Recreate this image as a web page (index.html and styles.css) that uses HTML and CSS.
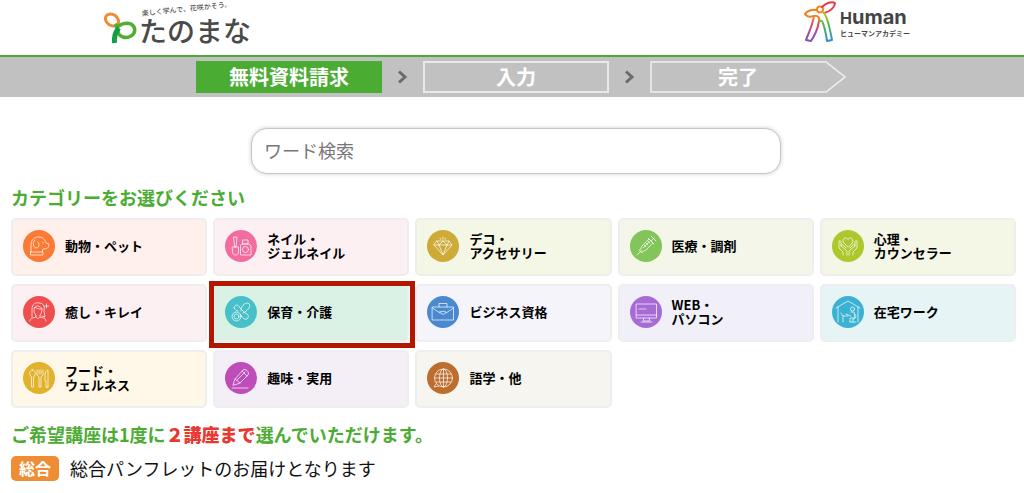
FILE: index.html
```
<!DOCTYPE html>
<html lang="ja">
<head>
    <meta charset="UTF-8">
    <meta name="viewport" content="width=device-width, initial-scale=1.0">
    <title>無料資料請求 | たのまな</title>
    <link rel="stylesheet" href="styles.css">
</head>
<body>
    <header class="header">
        <a href="#" class="logo">
            <svg width="150" height="48" viewBox="0 0 150 48" role="img" aria-label="たのまな">
                <g fill="none" stroke-linecap="butt">
                    <ellipse cx="8" cy="20" rx="7" ry="5.500" transform="rotate(35 8 20)" stroke="#f08c32" stroke-width="3"/>
                    <path d="M12 29C15 24 22 22 27 24C32 27 32 33 27 36C22 39 15 37 14 32C13 29 14 27 11 24" stroke="#4fae33" stroke-width="3.500"/>
                    <path d="M10.500 43C10 37 11 32 15 28" stroke="#0fa045" stroke-width="5"/>
                </g>
                <text class="logo-tagline" x="38" y="16" transform="rotate(-6 38 16)">楽しく学んで、花咲かそう。</text>
                <text class="logo-name" x="35" y="42">たのまな</text>
            </svg>
        </a>
        <a href="#" class="logo">
            <svg width="108" height="44" viewBox="0 0 108 44" role="img" aria-label="Human ヒューマンアカデミー">
                <defs>
                    <linearGradient id="body-left" x1="0" y1="0" x2="0" y2="1">
                        <stop offset="0" stop-color="#f08a24"/>
                        <stop offset=".3" stop-color="#e8474f"/>
                        <stop offset=".7" stop-color="#a04fae"/>
                        <stop offset="1" stop-color="#7a55bb"/>
                    </linearGradient>
                    <linearGradient id="body-right" x1="0" y1="0" x2="0" y2="1">
                        <stop offset="0" stop-color="#b9c42a"/>
                        <stop offset=".4" stop-color="#55b947"/>
                        <stop offset="1" stop-color="#2f8fd8"/>
                    </linearGradient>
                </defs>
                <g fill="none" stroke-width="2" stroke-linejoin="round" stroke-linecap="round">
                    <circle cx="16" cy="9.500" r="3" stroke="#f08a24"/>
                    <path d="M18 7C22 3 28 1 31 3C31 7 26 12 20 13" stroke="#e8374a"/>
                    <path d="M13 10C8 9 3 11 1 14C3 17 7 17 10 16" stroke="#f0801e"/>
                    <path d="M10 16C9 24 5 32 2 40L7 41C11 35 14 28 15 21C16 18 14 15 10 16" stroke="url(#body-left)"/>
                    <path d="M20 13C24 18 26 29 28 40L23 41C22 34 21 27 18 21H15" stroke="url(#body-right)"/>
                </g>
                <text class="human-name" x="36" y="24"><tspan class="human-cap">H</tspan>uman</text>
                <text class="human-sub" x="36" y="36">ヒューマンアカデミー</text>
            </svg>
        </a>
    </header>

    <!-- 進行ステップ -->
    <nav class="steps-bar" aria-label="お申し込みの流れ">
        <ol class="steps">
            <li class="step current" aria-current="step">無料資料請求</li>
            <li class="arrow" aria-hidden="true">
                <svg width="11" height="14" viewBox="0 0 11 14"><path d="M2 1.500L8 7L2 12.500" fill="none" stroke="#6b6b6b" stroke-width="3"/></svg>
            </li>
            <li class="step">入力</li>
            <li class="arrow" aria-hidden="true">
                <svg width="11" height="14" viewBox="0 0 11 14"><path d="M2 1.500L8 7L2 12.500" fill="none" stroke="#6b6b6b" stroke-width="3"/></svg>
            </li>
            <li class="step last">
                <svg class="step-shape" viewBox="0 0 196 32" aria-hidden="true"><path d="M1 1H176L195 16L176 31H1Z" fill="none" stroke="#efefef" stroke-width="1.500"/></svg>
                完了
            </li>
        </ol>
    </nav>

    <main class="main">
        <form class="search" role="search">
            <input type="search" class="search-input" placeholder="ワード検索" aria-label="ワード検索">
        </form>

        <h2 class="title">カテゴリーをお選びください</h2>
        <div class="categories">
            <button type="button" class="card pet">
                <svg class="icon" viewBox="0 0 32 32" aria-hidden="true">
                    <path d="M8 22V15C8 9 12 7 16 7C20 7 22 10 23 13L26 14C26 18 24 19 20 19L19 22M8 22H20V25H7.500V22Z"/>
                    <path d="M12 10C9 13 10 17 13 18C16 18 17 15 15 12M20 12V13"/>
                </svg>
                <span>動物・ペット</span>
            </button>
            <button type="button" class="card nail">
                <svg class="icon" viewBox="0 0 32 32" aria-hidden="true">
                    <path d="M9 7H12L11 17H10ZM7.500 17H13.500V22C13.500 24 12 25 10.500 25C9 25 7.500 24 7.500 22Z"/>
                    <path d="M18 10H23V14H18ZM17 14H24L26 16V25H15.500V16Z"/>
                    <circle cx="20.500" cy="19.500" r="3"/>
                </svg>
                <span>ネイル・<br>ジェルネイル</span>
            </button>
            <button type="button" class="card deco">
                <svg class="icon" viewBox="0 0 32 32" aria-hidden="true">
                    <path d="M10 11H22L25 15L16 25L7 15ZM7 15H25M12 15L16 25L20 15L16 11L12 15L10 11M20 15L22 11M16 7V9M13 8L14 9.500M19 8L18 9.500"/>
                </svg>
                <span>デコ・<br>アクセサリー</span>
            </button>
            <button type="button" class="card medical">
                <svg class="icon" viewBox="0 0 32 32" aria-hidden="true">
                    <path d="M7 25L11 21M9 20L12 23M10 20L12 16L19 9L23 13L16 20L12 22ZM18 8L24 14M21 11L24 8M21 6L26 11M14 15L16 17M16 13L18 15M18 11L20 13M13 18L19 12"/>
                </svg>
                <span>医療・調剤</span>
            </button>
            <button type="button" class="card mental">
                <svg class="icon" viewBox="0 0 32 32" aria-hidden="true">
                    <path d="M16 17L11.500 12.500C9.500 9 14 6 16 9.500C18 6 22.500 9 20.500 12.500Z"/>
                    <path d="M11 25V22L7 18V11C8 10 9 11 9 12V16L14 20L15 22V25M9 16C9 14 11 14 12 16L14 18"/>
                    <path d="M21 25V22L25 18V11C24 10 23 11 23 12V16L18 20L17 22V25M23 16C23 14 21 14 20 16L18 18"/>
                </svg>
                <span>心理・<br>カウンセラー</span>
            </button>
            <button type="button" class="card beauty">
                <svg class="icon" viewBox="0 0 32 32" aria-hidden="true">
                    <path d="M9 21C9 17 9 15 9 13C9 8 13 6 16 7C20 7 22 10 21 15L22 21L19 20M7 25C7 22 10 22 13 21V19C10 16 11 13 12 11C14 13 17 13 19 13C19 16 18 18 17 19V21C20 22 23 22 23 25M13 21C14 23 16 23 17 21M11 12C13 9 17 9 19 13"/>
                    <path d="M23.500 8V12M21.500 10H25.500"/>
                </svg>
                <span>癒し・キレイ</span>
            </button>
            <button type="button" class="card care selected">
                <svg class="icon" viewBox="0 0 32 32" aria-hidden="true">
                    <circle cx="11.500" cy="20.500" r="4.500"/>
                    <circle cx="11.500" cy="20.500" r="2.500"/>
                    <path d="M9 12C10 8 13 8 15 12L20 17C24 18 24 21 22 23C18 24 17 20 15 18M9 12C10 14 11 14 13 15M16 15C16 10 19 7 23 7C27 9 24 14 18 17"/>
                </svg>
                <span>保育・介護</span>
            </button>
            <button type="button" class="card business">
                <svg class="icon" viewBox="0 0 32 32" aria-hidden="true">
                    <path d="M5.500 11H26.500V24H5.500ZM12 11V7.500H20V11M5.500 12L13 17M26.500 12L19 17M13 16C15 15 17 15 19 16C18 19 14 19 13 16Z"/>
                </svg>
                <span>ビジネス資格</span>
            </button>
            <button type="button" class="card web">
                <svg class="icon" viewBox="0 0 32 32" aria-hidden="true">
                    <path d="M6.500 8H26.500V22H6.500ZM6.500 19H26.500M14 22L13 25H20L19 22M11 26H22M9 13H11M12 13H14M15 13H16"/>
                </svg>
                <span>WEB・<br>パソコン</span>
            </button>
            <button type="button" class="card home">
                <svg class="icon" viewBox="0 0 32 32" aria-hidden="true">
                    <path d="M4 12L16 5L28 12M6 11V26M26 11V26"/>
                    <circle cx="20.500" cy="13" r="2"/>
                    <path d="M19 16L22 16L23 22H18V26M14 18L19 20M9 17L11 20H16M11 20V26M23 18C25 20 24 23 21 23M21 23V26M18 26H24"/>
                </svg>
                <span>在宅ワーク</span>
            </button>
            <button type="button" class="card food">
                <svg class="icon" viewBox="0 0 32 32" aria-hidden="true">
                    <path d="M9.500 8C6 8 6 13 8.500 15V25H10.500V15C13 13 13 8 9.500 8ZM14 8V13L16 15V25H18V15L20 13V8M16 8V12M18 8V12M23 25V19H22V13C22 10 23 9 25 8V25Z"/>
                </svg>
                <span>フード・<br>ウェルネス</span>
            </button>
            <button type="button" class="card hobby">
                <svg class="icon" viewBox="0 0 32 32" aria-hidden="true">
                    <path d="M8 23L10 17L18 8C20 6 25 10 23 13L15 21ZM17 9L22 14M10 17L15 21M12 18L20 10M7 26H23"/>
                </svg>
                <span>趣味・実用</span>
            </button>
            <button type="button" class="card language">
                <svg class="icon" viewBox="0 0 32 32" aria-hidden="true">
                    <path d="M9 22L7 25L12 24"/>
                    <circle cx="16.500" cy="16" r="9"/>
                    <ellipse cx="16.500" cy="16" rx="4" ry="9"/>
                    <path d="M16.500 7V25M7.500 16H25.500M9 12H24M9 20H24"/>
                </svg>
                <span>語学・他</span>
            </button>
        </div>

        <p class="title note">ご希望講座は1度に<strong class="limit">２講座まで</strong>選んでいただけます。</p>
        <p class="pamphlet"><span class="badge">総合</span>総合パンフレットのお届けとなります</p>
    </main>
</body>
</html>
```
FILE: styles.css
```
* {
    box-sizing: border-box;
}
body {
    margin: 0;
    font-family: "Noto Sans CJK JP", sans-serif;
    background-color: #fff;
    color: #111;
}

/* Header */
.header {
    display: flex;
    justify-content: space-between;
    align-items: flex-start;
    padding: 0 112px 7px 104px;
    border-bottom: 2px solid #4bac33;
}
.logo svg {
    display: block;
}
.logo-tagline {
    font-size: 7px;
    font-weight: 500;
    fill: #555;
}
.logo-name {
    font-size: 28px;
    font-weight: 500;
    fill: #4a4a4a;
}
.human-name {
    font-family: Inter, sans-serif;
    font-size: 20px;
    font-weight: 700;
    fill: #444;
}
.human-cap {
    font-size: 16px;
}
.human-sub {
    font-size: 7px;
    font-weight: 700;
    fill: #444;
}

/* Steps */
.steps-bar {
    padding: 4px 0 4px 18px;
    background-color: #c1c1c1;
}
.steps {
    display: flex;
    justify-content: center;
    margin: 0;
    padding: 0;
    list-style: none;
}
.step {
    width: 186px;
    height: 32px;
    border: 2px solid #e9e9e9;
    color: #fff;
    font-size: 20px;
    font-weight: 700;
    line-height: 28px;
    text-align: center;
}
.step.current {
    background-color: #4bac33;
    border-color: #4bac33;
}
.step.last {
    position: relative;
    width: 196px;
    padding-right: 20px;
    border-color: transparent;
}
.step-shape {
    position: absolute;
    top: -2px;
    left: -2px;
    width: 196px;
    height: 32px;
}
.arrow {
    display: flex;
    align-items: center;
    justify-content: center;
    width: 41px;
}

/* Search */
.main {
    padding: 31px 8px 12px 11px;
}
.search {
    display: flex;
    justify-content: center;
    padding-left: 5px;
}
.search-input {
    width: 53%;
    height: 46px;
    padding: 0 12px 2px;
    border: 1px solid #c6c6c6;
    border-radius: 16px;
    box-shadow: 0 0 4px rgba(0, 0, 0, 0.2);
    font-family: inherit;
    font-size: 18px;
    outline: none;
}
.search-input::placeholder {
    color: #777;
}

/* Categories */
.title {
    margin: 10px 0 7px;
    color: #4bac33;
    font-size: 18px;
    font-weight: 700;
    line-height: 27px;
}
.categories {
    display: grid;
    grid-template-columns: repeat(5, 1fr);
    gap: 8px 6px;
}
.card {
    position: relative;
    display: flex;
    align-items: center;
    gap: 10px;
    height: 58px;
    padding: 0 10px 2px;
    border: 2px solid #eee;
    border-radius: 5px;
    color: #000;
    font-family: inherit;
    font-size: 13px;
    font-weight: 700;
    line-height: 14px;
    text-align: left;
    cursor: pointer;
}
.icon {
    flex: none;
    width: 32px;
    height: 32px;
    border-radius: 50%;
    fill: none;
    stroke: rgba(255, 255, 255, 0.7);
    stroke-width: 1;
    stroke-linejoin: round;
    stroke-linecap: round;
}
.pet { background-color: #fff0ec; }
.pet .icon { background-color: #fb7a35; }
.nail { background-color: #fdf0f3; }
.nail .icon { background-color: #f26d9f; }
.deco { background-color: #f4f6e6; }
.deco .icon { background-color: #ceaa37; }
.medical { background-color: #f4f6e9; }
.medical .icon { background-color: #83c45b; }
.mental { background-color: #f4f6e6; }
.mental .icon { background-color: #adc82e; }
.beauty { background-color: #fdf0f3; }
.beauty .icon { background-color: #ee4e4d; }
.care { background-color: #daf1e5; }
.care .icon { background-color: #48c0c9; }
.business { background-color: #f5f4fa; }
.business .icon { background-color: #4b89cf; }
.web { background-color: #f1eff7; }
.web .icon { background-color: #a66bd5; }
.home { background-color: #e6f4f6; }
.home .icon { background-color: #3cb2d3; }
.food { background-color: #fff7e7; }
.food .icon { background-color: #e2b22d; }
.hobby { background-color: #f4eff6; }
.hobby .icon { background-color: #be4db9; }
.language { background-color: #f6f5ef; }
.language .icon { background-color: #bd6e2e; }

/* Red frame over the selected category */
.selected::after {
    content: "";
    position: absolute;
    inset: -5px -8px -8px -6px;
    z-index: 1;
    border: 5px solid #b31700;
}

/* Notes */
.note {
    margin: 13px 0 7px;
}
.limit {
    color: #e8382f;
}
.pamphlet {
    display: flex;
    align-items: center;
    gap: 11px;
    margin: 0;
    font-size: 18px;
    line-height: 26px;
}
.badge {
    padding: 0 8px;
    border-radius: 5px;
    background-color: #ef8d35;
    color: #fff;
    font-size: 16px;
    font-weight: 700;
    line-height: 25px;
}
```
